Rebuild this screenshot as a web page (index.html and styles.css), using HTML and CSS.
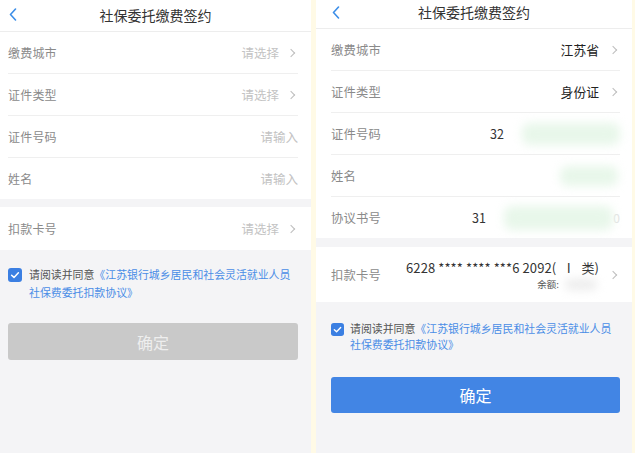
FILE: index.html
```html
<!DOCTYPE html>
<html lang="zh-CN">
<head>
<meta charset="utf-8">
<title>社保委托缴费签约</title>
<link rel="stylesheet" href="styles.css">
</head>
<body>
<div class="screen">
  <section class="phone phone-a">
    <header class="nav">
      <svg class="back" width="8" height="13" viewBox="0 0 8 13"><path d="M6.5 1 L1.5 6.5 L6.5 12" fill="none" stroke="#3c8ee8" stroke-width="1.6" stroke-linecap="round" stroke-linejoin="round"/></svg>
      <h1 class="title">社保委托缴费签约</h1>
    </header>
    <div class="group">
      <div class="row"><span class="label">缴费城市</span><span class="ph">请选择</span><span class="chev"></span></div>
      <div class="row"><span class="label">证件类型</span><span class="ph">请选择</span><span class="chev"></span></div>
      <div class="row"><span class="label">证件号码</span><span class="ph">请输入</span></div>
      <div class="row last"><span class="label">姓名</span><span class="ph">请输入</span></div>
    </div>
    <div class="group group2">
      <div class="row row-card last"><span class="label">扣款卡号</span><span class="ph">请选择</span><span class="chev"></span></div>
    </div>
    <div class="agree">
      <span class="check"><svg width="14" height="14" viewBox="0 0 14 14"><rect width="14" height="14" rx="3" fill="#3b7fe2"/><path d="M3.6 7.2 L6 9.4 L10.4 4.8" fill="none" stroke="#fff" stroke-width="1.5" stroke-linecap="round" stroke-linejoin="round"/></svg></span>
      <div class="agree-text">
        <div class="line">请阅读并同意<span class="link">《江苏银行城乡居民和社会灵活就业人员</span></div>
        <div class="line link">社保费委托扣款协议》</div>
      </div>
    </div>
    <button class="btn btn-off">确定</button>
  </section>

  <section class="phone phone-b">
    <header class="nav">
      <svg class="back" width="8" height="13" viewBox="0 0 8 13"><path d="M6.5 1 L1.5 6.5 L6.5 12" fill="none" stroke="#3c8ee8" stroke-width="1.6" stroke-linecap="round" stroke-linejoin="round"/></svg>
      <h1 class="title">社保委托缴费签约</h1>
    </header>
    <div class="group">
      <div class="row"><span class="label">缴费城市</span><span class="val">江苏省</span><span class="chev"></span></div>
      <div class="row"><span class="label">证件类型</span><span class="val">身份证</span><span class="chev"></span></div>
      <div class="row"><span class="label">证件号码</span><span class="num num-id">32</span><span class="blur blur-id"></span></div>
      <div class="row"><span class="label">姓名</span><span class="blur blur-name"></span></div>
      <div class="row last"><span class="label">协议书号</span><span class="num num-no">31</span><span class="blur blur-no"></span><span class="faint">0</span></div>
    </div>
    <div class="group group2">
      <div class="row row-card last">
        <span class="label">扣款卡号</span>
        <div class="card">
          <span class="card-no">6228 **** **** ***6 2092(&nbsp; Ⅰ&nbsp; 类)</span>
          <span class="bal">余额: <span class="blur blur-bal"></span></span>
        </div>
        <span class="chev"></span>
      </div>
    </div>
    <div class="agree">
      <span class="check"><svg width="13" height="13" viewBox="0 0 14 14"><rect width="14" height="14" rx="3" fill="#3b7fe2"/><path d="M3.6 7.2 L6 9.4 L10.4 4.8" fill="none" stroke="#fff" stroke-width="1.5" stroke-linecap="round" stroke-linejoin="round"/></svg></span>
      <div class="agree-text">
        <div class="line">请阅读并同意<span class="link">《江苏银行城乡居民和社会灵活就业人员</span></div>
        <div class="line link">社保费委托扣款协议》</div>
      </div>
    </div>
    <button class="btn btn-on">确定</button>
  </section>
</div>
</body>
</html>
```

FILE: styles.css
```css
* { box-sizing: border-box; }
html, body { margin: 0; padding: 0; }
body {
  width: 635px;
  height: 453px;
  overflow: hidden;
  background: #fffae6;
  font-family: "Noto Sans CJK SC", "Noto Sans", sans-serif;
}
.screen {
  display: flex;
  height: 453px;
}
.phone {
  background: #f4f4f6;
  display: flex;
  flex-direction: column;
  height: 453px;
}
.phone-a { width: 311px; }
.phone-b { width: 316px; margin-left: 5px; }

.nav {
  background: #fff;
  display: flex;
  justify-content: center;
  position: relative;
  border-bottom: 1px solid #ededed;
}
.phone-a .nav { height: 32px; padding-top: 5px; }
.phone-b .nav { height: 29px; padding-top: 2px; }
.back { position: absolute; }
.phone-a .back { left: 9px; top: 8px; }
.phone-b .back { left: 16px; top: 6px; }
.title {
  margin: 0;
  font-size: 14px;
  line-height: 20px;
  font-weight: 400;
  color: #333;
}

.group { background: #fff; }
.group2 { margin-top: 8px; }
.phone-b .group2 { margin-top: 9px; }

.row {
  display: flex;
  align-items: center;
  height: 42px;
  border-bottom: 1px solid #efefef;
  white-space: nowrap;
}
.phone-a .row { margin: 0 13px 0 8px; }
.phone-b .row { margin: 0 12px 0 15px; }
.row.last { border-bottom: none; height: 41px; }
.phone-a .row-card { height: 43px; }
.phone-b .row-card { height: 55px; }

.label {
  flex: none;
  font-size: 12px;
  color: #8a8a8a;
  letter-spacing: 0.2px;
}
.phone-b .label { font-size: 12.3px; }
.ph {
  margin-left: auto;
  font-size: 12.5px;
  color: #c3c3c3;
}
.val {
  margin-left: auto;
  font-size: 12.8px;
  color: #222;
  font-weight: 400;
}
.chev {
  flex: none;
  width: 6px;
  height: 6px;
  border-top: 1.2px solid #bdbdbd;
  border-right: 1.2px solid #bdbdbd;
  transform: rotate(45deg);
  margin-left: 9px;
  margin-right: 4px;
}
.phone-b .chev { margin-left: 11px; margin-right: 4px; }

.num {
  flex: none;
  font-size: 12.5px;
  color: #333;
}
.num-id { margin-left: 109px; }
.num-no { margin-left: 91px; }
.blur {
  display: inline-block;
  filter: blur(5px);
  background: #e8f7ea;
  border-radius: 8px;
}
.blur-id { height: 22px; width: 110px; margin-left: 18px; }
.blur-name { height: 20px; width: 58px; margin-left: auto; margin-right: 2px; }
.blur-no { height: 24px; width: 118px; margin-left: 18px; }
.faint { margin-left: auto; font-size: 12px; color: #e2e2e2; }
.blur-bal { width: 32px; height: 11px; background: #ececec; vertical-align: middle; margin-left: 4px; }

.card {
  margin-left: auto;
  display: flex;
  flex-direction: column;
  align-items: flex-end;
}
.card-no {
  font-size: 13px;
  color: #333;
  line-height: 17px;
  letter-spacing: 0.1px;
}
.bal {
  font-size: 9.5px;
  color: #555;
  line-height: 14px;
  margin-top: 1px;
  margin-right: 2px;
}

.agree {
  display: flex;
  align-items: flex-start;
}
.phone-a .agree { padding: 15px 12px 0 8px; }
.phone-b .agree { padding: 18px 12px 0 15px; }
.check { flex: none; display: flex; }
.phone-a .check { margin-top: 3px; margin-right: 7px; }
.phone-b .check { margin-top: 3px; margin-right: 6px; }
.agree-text {
  font-size: 10.9px;
  color: #555;
  white-space: nowrap;
}
.phone-a .agree-text { line-height: 18px; }
.phone-b .agree-text { line-height: 16px; }
.link { color: #4a8de6; }

.btn {
  border: none;
  font-family: inherit;
  font-size: 16px;
  border-radius: 3px;
  display: block;
}
.btn-off {
  margin: 22px 13px 0 8px;
  height: 37px;
  background: #c9c9c9;
  color: #eeeeee;
}
.btn-on {
  margin: 25px 12px 0 15px;
  height: 36px;
  background: #4285e4;
  color: #fff;
}
```
